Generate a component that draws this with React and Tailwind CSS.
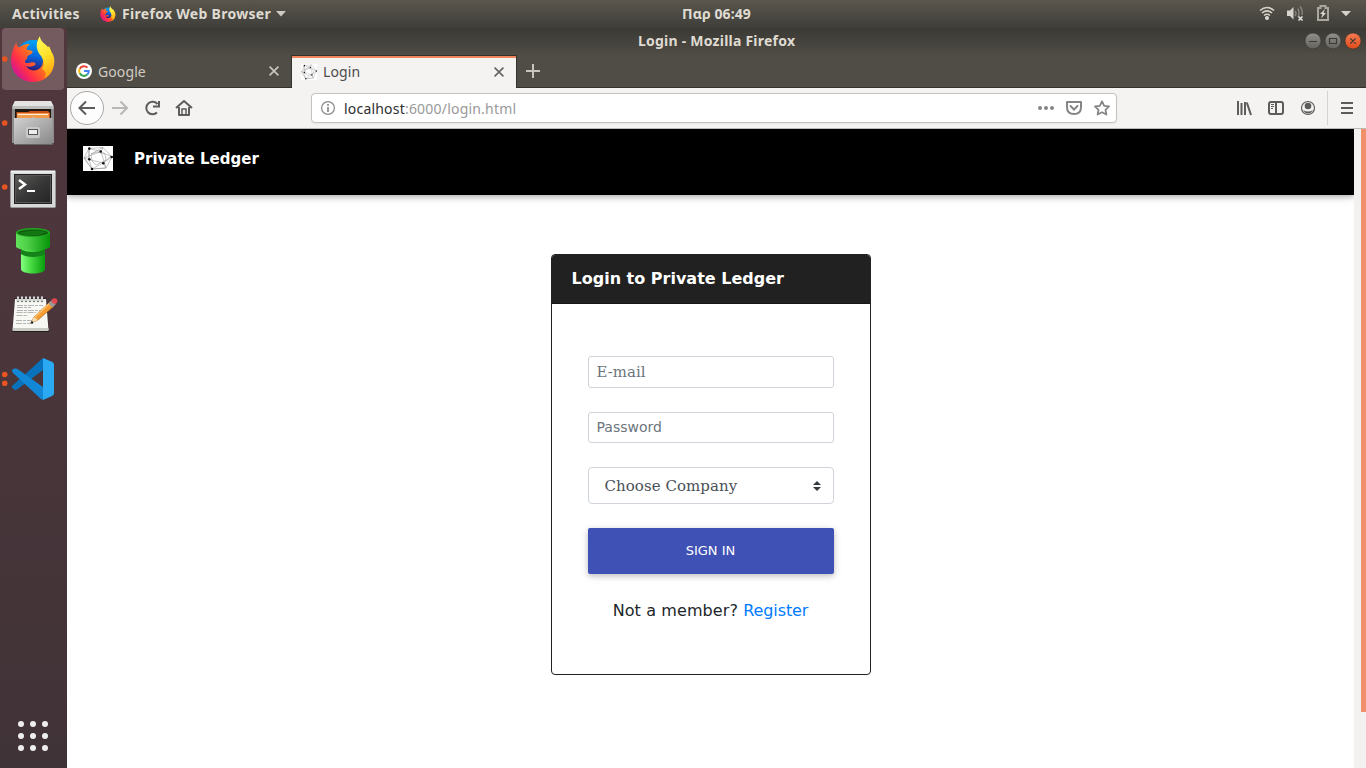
import React from "react";

const ui = "font-['Noto_Sans','Open_Sans',sans-serif]";

function FirefoxLogo({ size, className = "" }) {
  return (
    <svg width={size} height={size} viewBox="0 0 44 46" className={className}>
      <defs>
        <linearGradient id="ffBlue" x1="0.6" y1="0" x2="0.4" y2="1">
          <stop offset="0" stopColor="#00a8fa" />
          <stop offset="0.45" stopColor="#0568e0" />
          <stop offset="0.85" stopColor="#2e1a78" />
        </linearGradient>
        <linearGradient id="ffBody" x1="0.95" y1="0.15" x2="0.08" y2="0.8">
          <stop offset="0" stopColor="#fff13c" />
          <stop offset="0.22" stopColor="#ffb412" />
          <stop offset="0.48" stopColor="#ff6a22" />
          <stop offset="0.75" stopColor="#ff2f48" />
          <stop offset="1" stopColor="#d0139a" />
        </linearGradient>
        <linearGradient id="ffFlame" x1="0.3" y1="0" x2="0.6" y2="1">
          <stop offset="0" stopColor="#fff95a" />
          <stop offset="0.5" stopColor="#ffe12a" />
          <stop offset="1" stopColor="#ffa010" />
        </linearGradient>
      </defs>
      <circle cx="22" cy="21.500" r="17.500" fill="url(#ffBlue)" />
      <path fill="url(#ffBody)" d="M5.500 6C5 8.500 6 10.500 8 11.500C11 9 15 7.500 19 8C17 9.500 15.500 11.500 15.500 13.500L21.500 15C22 17 20 18.500 16.500 20L16 23C14 24 13.500 25 14.500 27C18 27.500 19.500 25.500 23 26.500C26 27.500 24.500 30 20 30.500C17 31 15 30 15 30C17 34 22 35.500 27 33.500C32 31 33 25 31 20L38 10C39 12 40 14 40 15C43 19 44 24 43 29C41 40 32 46 22 46C10 46 0 37 0 24C0 19 2 12 5.500 6Z" />
      <path fill="url(#ffFlame)" d="M29 0C29 5 33 7 37 11C41 16 44 24 42 31C41 36 38 40 33 42C36 38 35 35 31 33C34 29 33 25 30 20C24 13 25 6 29 0Z" />
    </svg>
  );
}

function NetworkMark({ className }) {
  return (
    <svg viewBox="0 0 30 25" className={className} preserveAspectRatio="none">
      <rect width="30" height="25" fill="#fff" />
      <g fill="none" stroke="#8a8a8a" strokeWidth="0.5">
        <path d="M6 2.500L20 1.500L29 11L23 22L9 23L1 12ZM6 2.500L18 5.500L29 11L20 17L9 23L6 13.500ZM6 2.500L6 13.500L1 12L18 5.500L23 22L20 17L6 13.500M18 5.500L20 1.500M20 17L28 10M1 12L9 23L23 22M8 8L14 6L22 8L23 14L13 19L9 15ZM20 1.500L8 8" />
      </g>
      <g fill="#111">
        <circle cx="6.300" cy="2.600" r="1.300" /><circle cx="17.700" cy="5.500" r="1.300" /><circle cx="28.700" cy="11" r="1.300" />
        <circle cx="20.300" cy="17.200" r="1.300" /><circle cx="9" cy="23" r="1.300" /><circle cx="6.300" cy="13.300" r="1.300" />
      </g>
    </svg>
  );
}

function DockItem({ top, dots = [], children }) {
  return (
    <div className="h-[62px] w-[62px] shrink-0">
      <svg width="62" height="62" viewBox={`2 ${top} 62 62`}>
        {dots.map((y) => <circle key={y} cx="4.700" cy={y} r="2.800" fill="#e95420" />)}
        {children}
      </svg>
    </div>
  );
}

function Dock() {
  return (
    <aside className="flex w-[67px] shrink-0 flex-col gap-[2px] bg-linear-to-b from-[#51373d] to-[#403337] pl-[2px]">
      <div className="flex h-[62px] w-[62px] shrink-0 items-center rounded-[4px] bg-[#735b60]">
        <svg width="7" height="8" viewBox="0 0 7 8"><circle cx="2.700" cy="4" r="2.800" fill="#e95420" /></svg>
        <FirefoxLogo size={46} className="ml-[1px]" />
      </div>
      <DockItem top={92} dots={[123]}>
        <defs>
          <linearGradient id="cab" x1="0" y1="0" x2="1" y2="1"><stop offset="0" stopColor="#d2d2d2" /><stop offset="1" stopColor="#888" /></linearGradient>
        </defs>
        <path d="M15 101H51L54 107V143H12V107Z" fill="#8d8d8d" />
        <path d="M15 101H51L53.500 106H12.500Z" fill="#e3e3e3" />
        <path d="M12.500 106H53.500V109H12.500Z" fill="#bdbdbd" />
        <rect x="15" y="109" width="36" height="10" fill="#1d1712" />
        <path d="M16.500 112H28L30 111H48L50 113V118H16.500Z" fill="#c94f1b" />
        <path d="M17 113H49V118H17Z" fill="#f09a4b" />
        <rect x="18" y="114" width="30" height="1" fill="#fff0dc" />
        <path d="M14 118H31L33 117L35 118H52.500V144.500H14Z" fill="url(#cab)" />
        <rect x="26" y="127" width="14" height="11" rx="2" fill="#c9c9c9" />
        <rect x="28.500" y="129.500" width="9" height="5" fill="#eee" stroke="#555" />
        <path d="M14 144.500H52.500" stroke="#666" />
      </DockItem>
      <DockItem top={156} dots={[187]}>
        <defs>
          <linearGradient id="term" x1="0" y1="0" x2="1" y2="1"><stop offset="0" stopColor="#5b5b58" /><stop offset="0.5" stopColor="#383838" /><stop offset="1" stopColor="#242424" /></linearGradient>
        </defs>
        <rect x="10.500" y="170.500" width="45" height="37" rx="1" fill="#d8d8d8" stroke="#999" />
        <rect x="11" y="171" width="44" height="1.500" fill="#f3f3f3" />
        <rect x="14" y="174" width="38" height="30" fill="#222" />
        <rect x="15.500" y="175.500" width="35" height="27" fill="url(#term)" stroke="#555" />
        <path d="M19 180L25 184.500L19 189" fill="none" stroke="#fff" strokeWidth="2.500" />
        <path d="M27 191H35" stroke="#fff" strokeWidth="2" />
      </DockItem>
      <DockItem top={220}>
        <defs>
          <linearGradient id="pipe"><stop offset="0" stopColor="#62e35b" /><stop offset="0.35" stopColor="#4cce46" /><stop offset="1" stopColor="#07950a" /></linearGradient>
          <linearGradient id="pipeLow"><stop offset="0" stopColor="#84ff80" /><stop offset="0.4" stopColor="#4adc45" /><stop offset="1" stopColor="#079d0c" /></linearGradient>
        </defs>
        <path d="M21 244V269C21 275 45 275 45 269V244Z" fill="url(#pipeLow)" />
        <path d="M21 249C26 253 40 253 45 249V254C40 258 26 258 21 254Z" fill="#16831a" />
        <path d="M16 232V247C20 251.500 46 251.500 50 247V232Z" fill="url(#pipe)" />
        <ellipse cx="33" cy="232.500" rx="17" ry="4.500" fill="#1fa41e" />
        <ellipse cx="33" cy="232.800" rx="15" ry="3.200" fill="#105c10" />
        <path d="M19 233Q32 229 47 232Q39 236 28 235.500Z" fill="#137813" />
      </DockItem>
      <DockItem top={284}>
        <path d="M15 298H46L49 332H12Z" fill="#242021" />
        <path d="M15 299H46L48.500 330H12.500Z" fill="#f7f7f4" />
        <path d="M13 328H48.500V331H12.500Z" fill="#c9cbc4" />
        <path d="M18 297.500V301M22 297.500V301M26 297.500V301M30 297.500V301M34 297.500V301M38 297.500V301M42 297.500V301" stroke="#777" strokeWidth="2.400" strokeLinecap="round" />
        <path d="M18 296.500V301M22 296.500V301M26 296.500V301M30 296.500V301M34 296.500V301M38 296.500V301M42 296.500V301" stroke="#f2f2f2" strokeWidth="1.400" />
        <path d="M17 305.500H43M17 307.500H31M17 310.500H41M16.500 312.500H36M16.500 315.500H28M16 320.500H35M16 323.500H31" stroke="#b5b5b5" strokeDasharray="6 1 3 1" />
        <path d="M31 323L34 317L50 302L54 306L38 320Z" fill="#f59c32" stroke="#b86818" strokeWidth="0.700" />
        <path d="M35 317L51 302" stroke="#ffc46e" strokeWidth="1.500" />
        <path d="M31 323L34 317L38 320Z" fill="#f3dfb4" /><circle cx="32" cy="322.500" r="1.200" fill="#222" />
        <path d="M48.500 303.500L52 300L56 304L52.500 307.500Z" fill="#999" /><circle cx="54.500" cy="301" r="2.800" fill="#e34750" />
      </DockItem>
      <DockItem top={348} dots={[374.5, 383.3]}>
        <path d="M43 358L21 378L12 386V388L15 390Q17 390 19 388L43 370Z" fill="#0873bc" />
        <path d="M12 371Q12 369 15 368.500Q17 368 19 370L43 387V400L41 399L13 373Z" fill="#1187d5" />
        <path d="M43 358L52.500 362Q54 363 54 365V393Q54 395 52 396L43 400Z" fill="#2aaaf3" />
      </DockItem>
      <div className="mt-auto grid w-[62px] shrink-0 grid-cols-[repeat(3,6px)] justify-center gap-[6px] pb-[17px]">
        {[0, 1, 2, 3, 4, 5, 6, 7, 8].map((n) => <span key={n} className="h-[6px] w-[6px] rounded-full bg-[#eeeeec]" />)}
      </div>
    </aside>
  );
}

function TopBar() {
  return (
    <header className={"grid h-7 shrink-0 grid-cols-[682px_1fr_108px] items-center bg-linear-to-b from-[#5a564d] to-[#3f3e39] text-[14px] leading-7 font-bold text-[#dfdbd2] " + ui}>
      <div className="flex items-center">
        <span className="ml-3 w-[88px] tracking-[0.27px] whitespace-nowrap">Activities</span>
        <FirefoxLogo size={16} />
        <span className="ml-[6px] w-[149px] tracking-[0.3px] whitespace-nowrap">Firefox Web Browser</span>
        <svg width="10" height="6" viewBox="0 0 10 6" className="ml-[5px]"><path d="M0 0H10L5 5.500Z" fill="#cfcbc3" /></svg>
      </div>
      <span className="h-[28px] leading-[27px] tracking-[0.1px] whitespace-nowrap">Παρ 06:49</span>
      <svg width="108" height="28" viewBox="1258 0 108 28">
        <g fill="none" stroke="#d5d2ca" strokeWidth="1.600">
          <path d="M1260 10.500Q1267 4.500 1274 10.500M1262 13Q1267 8.800 1272 13M1264 15.500Q1267 13 1270 15.500" />
        </g>
        <circle cx="1267" cy="18" r="2" fill="#dedbd4" />
        <path d="M1287 10.500H1290L1293.500 7V19.500L1290 16H1287Z" fill="#d8d5ce" />
        <path d="M1295 11Q1297 13 1295 16M1298 8.500Q1300 13 1298 17M1300 6.500Q1303 10 1302 15" fill="none" stroke="#85827a" strokeWidth="1.500" />
        <path d="M1298.500 16.500L1302.500 20.500M1302.500 16.500L1298.500 20.500" stroke="#e2dfd8" strokeWidth="1.700" />
        <path d="M1318 8H1320.500V6H1325.500V8H1328V20H1318Z" fill="none" stroke="#aaa79e" strokeWidth="2" />
        <path d="M1325 9L1320 14H1322.500L1321 18.500L1326 13H1323.500Z" fill="#dedbd4" />
        <path d="M1341 11H1351L1346 16.200Z" fill="#d5d2ca" />
      </svg>
    </header>
  );
}

function TitleBar() {
  return (
    <div className="grid h-[27px] shrink-0 grid-cols-[571px_1fr_62px] items-center bg-linear-to-b from-[#3a3934] to-[#4f4c45]">
      <span />
      <span className={"h-[27px] text-[14px] leading-[25px] font-bold tracking-[0.23px] whitespace-nowrap text-[#dfdbd2] " + ui}>Login - Mozilla Firefox</span>
      <svg width="62" height="27" viewBox="1304 28 62 27">
        <defs>
          <linearGradient id="wb" x1="0" y1="0" x2="0" y2="1"><stop offset="0" stopColor="#92908a" /><stop offset="1" stopColor="#63615b" /></linearGradient>
          <linearGradient id="wc" x1="0" y1="0" x2="0" y2="1"><stop offset="0" stopColor="#f67b54" /><stop offset="1" stopColor="#df4b19" /></linearGradient>
        </defs>
        <circle cx="1313" cy="41" r="8" fill="url(#wb)" stroke="#33322e" strokeWidth="0.600" />
        <circle cx="1333" cy="41" r="8" fill="url(#wb)" stroke="#33322e" strokeWidth="0.600" />
        <circle cx="1353" cy="41" r="8" fill="url(#wc)" stroke="#33322e" strokeWidth="0.600" />
        <path d="M1309 41.500H1317M1329.500 38.500H1336.500V43.500H1329.500ZM1350.300 38.300L1355.700 43.700M1355.700 38.300L1350.300 43.700" fill="none" stroke="#3a3935" strokeWidth="1.200" />
      </svg>
    </div>
  );
}

function CloseX({ color }) {
  return (
    <svg width="10" height="10" viewBox="0 0 10 10" className="mr-[12px] ml-auto">
      <path d="M0.600 0.600L9.400 9.400M9.400 0.600L0.600 9.400" stroke={color} strokeWidth="1.700" />
    </svg>
  );
}

function Tabs() {
  return (
    <div className={"flex h-[33px] shrink-0 bg-[#504d46] text-[14px] " + ui}>
      <div className="flex w-[224px] items-center border-b border-[#32312d] pl-[9px] text-[#d0ccc3]">
        <svg width="16" height="16" viewBox="0 0 16 16">
          <circle cx="8" cy="8" r="8" fill="#fff" />
          <g fill="none" strokeWidth="2">
            <path d="M11.500 4.600A4.900 4.900 0 0 0 3.700 5.700" stroke="#ea4335" />
            <path d="M3.700 5.700A4.900 4.900 0 0 0 3.700 10.300" stroke="#fbbc05" />
            <path d="M3.700 10.300A4.900 4.900 0 0 0 11.300 11.600" stroke="#34a853" />
            <path d="M11.300 11.600Q12.900 10.200 12.800 8H8" stroke="#4285f4" />
          </g>
        </svg>
        <span className="ml-[6px] tracking-[0.1px]">Google</span>
        <CloseX color="#c9c5bc" />
      </div>
      <div className="flex w-[226px] items-center border-x border-t border-[#32312d] bg-[#f4f3f1] pl-[9px] text-[#4c4c4c] shadow-[inset_0_2px_0_#f0845a]">
        <NetworkMark className="h-4 w-4" />
        <span className="mb-[2px] ml-[6px] tracking-[0.1px]">Login</span>
        <CloseX color="#666" />
      </div>
      <div className="flex flex-1 items-center border-b border-[#32312d] pl-[9px]">
        <svg width="14" height="14" viewBox="0 0 14 14"><path d="M7 0V14M0 7H14" stroke="#c9c5bc" strokeWidth="2" /></svg>
      </div>
    </div>
  );
}

function Toolbar() {
  return (
    <div className="flex h-[41px] shrink-0 items-center border-b border-[#bcbab7] bg-[#f4f3f1]">
      <svg width="244" height="40" viewBox="67 88 244 40" fill="none" className="shrink-0">
        <circle cx="87" cy="108" r="16.500" fill="#fdfdfd" stroke="#a9a8a6" />
        <path d="M95 108H80M86 101.500L79.500 108L86 114.500" stroke="#5c5c5c" strokeWidth="2" />
        <path d="M112 108H127M120.500 101.500L127 108L120.500 114.500" stroke="#b8b7b5" strokeWidth="2" />
        <path d="M157.500 104A6.300 6.300 0 1 0 157 112.500M159 101V106.500H153" stroke="#5c5c5c" strokeWidth="2" />
        <path d="M176 108L184 101L192 108M179 107V115H189V107" stroke="#5c5c5c" strokeWidth="2" strokeLinejoin="round" />
        <path d="M182 115V109H186V115" stroke="#5c5c5c" strokeWidth="1.500" />
      </svg>
      <div className="flex h-[30px] w-[806px] shrink-0 items-center rounded-[4px] border border-[#c3c2c0] bg-white shadow-[0_1px_2px_rgba(0,0,0,0.06)]">
        <svg width="14" height="14" viewBox="0 0 14 14" className="ml-[9px]">
          <circle cx="7" cy="7" r="6.400" fill="none" stroke="#888" strokeWidth="1.200" />
          <path d="M7 3V4.700M7 6V11" stroke="#888" strokeWidth="1.700" />
        </svg>
        <span className={"ml-[9px] text-[14px] tracking-[0.2px] whitespace-nowrap text-[#999] " + ui}><span className="text-[#2e2e2e]">localhost</span>:6000/login.html</span>
        <svg width="82" height="28" viewBox="1034 94 82 28" className="ml-auto" fill="none" stroke="#858585" strokeWidth="2">
          <g fill="#858585" stroke="none"><circle cx="1040" cy="108" r="2" /><circle cx="1046" cy="108" r="2" /><circle cx="1052" cy="108" r="2" /></g>
          <path d="M1067 102H1081V107Q1081 114 1074 114Q1067 114 1067 107Z" strokeLinejoin="round" />
          <path d="M1070.500 106L1074 109.500L1077.500 106" strokeLinecap="round" />
          <path d="M1102 101.300L1104.200 105.800L1109 106.400L1105.500 109.800L1106.400 114.500L1102 112.200L1097.600 114.500L1098.500 109.800L1095 106.400L1099.800 105.800Z" strokeWidth="1.800" strokeLinejoin="round" />
        </svg>
      </div>
      <svg width="249" height="40" viewBox="1117 88 249 40" className="shrink-0" fill="none" stroke="#5c5c5c" strokeWidth="2">
        <path d="M1238 101V115M1241.500 103V115M1245 102V115M1246.800 102.500L1251 115" />
        <rect x="1269" y="102" width="14" height="12" rx="2" />
        <path d="M1276 102V114" /><path d="M1271 104.500H1274M1271 106.500H1274M1271 108.500H1273" strokeWidth="1" />
        <circle cx="1308" cy="108" r="6.500" strokeWidth="1.200" />
        <circle cx="1308" cy="106" r="3.300" fill="#5c5c5c" stroke="none" /><path d="M1303 110Q1308 113 1313 110Q1311 113.500 1308 113.500Q1305 113.500 1303 110Z" fill="#5c5c5c" stroke="none" />
        <path d="M1327.500 91V125" stroke="#d4d3d1" strokeWidth="1" />
        <path d="M1341 103H1353M1341 108H1353M1341 113H1353" />
      </svg>
    </div>
  );
}

function LoginCard() {
  return (
    <section className="mx-auto mt-[59px] flex h-[421px] w-[320px] flex-col overflow-hidden rounded-[4px] border border-[#212121]">
      <h1 className="h-[49px] shrink-0 border-b border-[#171717] bg-[#212121] pl-5 text-[16px] leading-[47px] font-bold text-white">Login to Private Ledger</h1>
      <div className="flex flex-col px-9 pt-[52px]">
        <div className="h-8 rounded-[3px] border border-[#ced4da] pl-2 font-['DejaVu_Serif',serif] text-[15px] leading-[30px] text-[#6c757d]">E-mail</div>
        <div className="mt-6 h-[31px] rounded-[3px] border border-[#ced4da] pl-2 text-[14px] leading-[28px] text-[#6c757d]">Password</div>
        <div className="mt-6 flex h-[37px] items-center rounded-[4px] border border-[#ced4da] pr-3 pl-4 font-['DejaVu_Serif',serif] text-[15px] text-[#495057]">
          <span className="pt-[2px] tracking-[0.06px]">Choose Company</span>
          <svg width="8" height="10" viewBox="0 0 4 5" className="ml-auto"><path d="M2 0L0 2H4ZM2 5L0 3H4Z" fill="#343a40" /></svg>
        </div>
        <button className="mt-6 h-[46px] rounded-[2px] bg-[#3f51b5] text-[13px] text-white shadow-[0_2px_5px_rgba(0,0,0,0.16),0_2px_10px_rgba(0,0,0,0.12)]">SIGN IN</button>
        <p className="mt-[25px] text-center text-[16px] leading-6 whitespace-nowrap text-[#212529]"><span className="tracking-[0.1px]">Not a member? </span><a className="tracking-[-0.1px] text-[#007bff]">Register</a></p>
      </div>
    </section>
  );
}

export default function App() {
  return (
    <div className="flex h-[768px] w-[1366px] flex-col overflow-hidden bg-white">
      <TopBar />
      <div className="flex min-h-0 flex-1">
        <Dock />
        <div className="flex w-[1299px] shrink-0 flex-col">
          <TitleBar />
          <Tabs />
          <Toolbar />
          <div className="flex min-h-0 flex-1 font-['DejaVu_Sans',sans-serif]">
            <main className="min-w-0 flex-1 overflow-hidden">
              <nav className="flex h-[66px] bg-black pl-4 shadow-[0_2px_5px_rgba(0,0,0,0.22),0_2px_10px_rgba(0,0,0,0.12)]">
                <NetworkMark className="mt-[17px] h-[25px] w-[30px]" />
                <span className="mt-[18px] ml-[21px] text-[15px] leading-6 font-bold text-white">Private Ledger</span>
              </nav>
              <LoginCard />
            </main>
            <div className="flex w-3 justify-end bg-[#f2f1f0]"><div className="h-[583px] w-[5px] bg-[#f0906a]" /></div>
          </div>
        </div>
      </div>
    </div>
  );
}
